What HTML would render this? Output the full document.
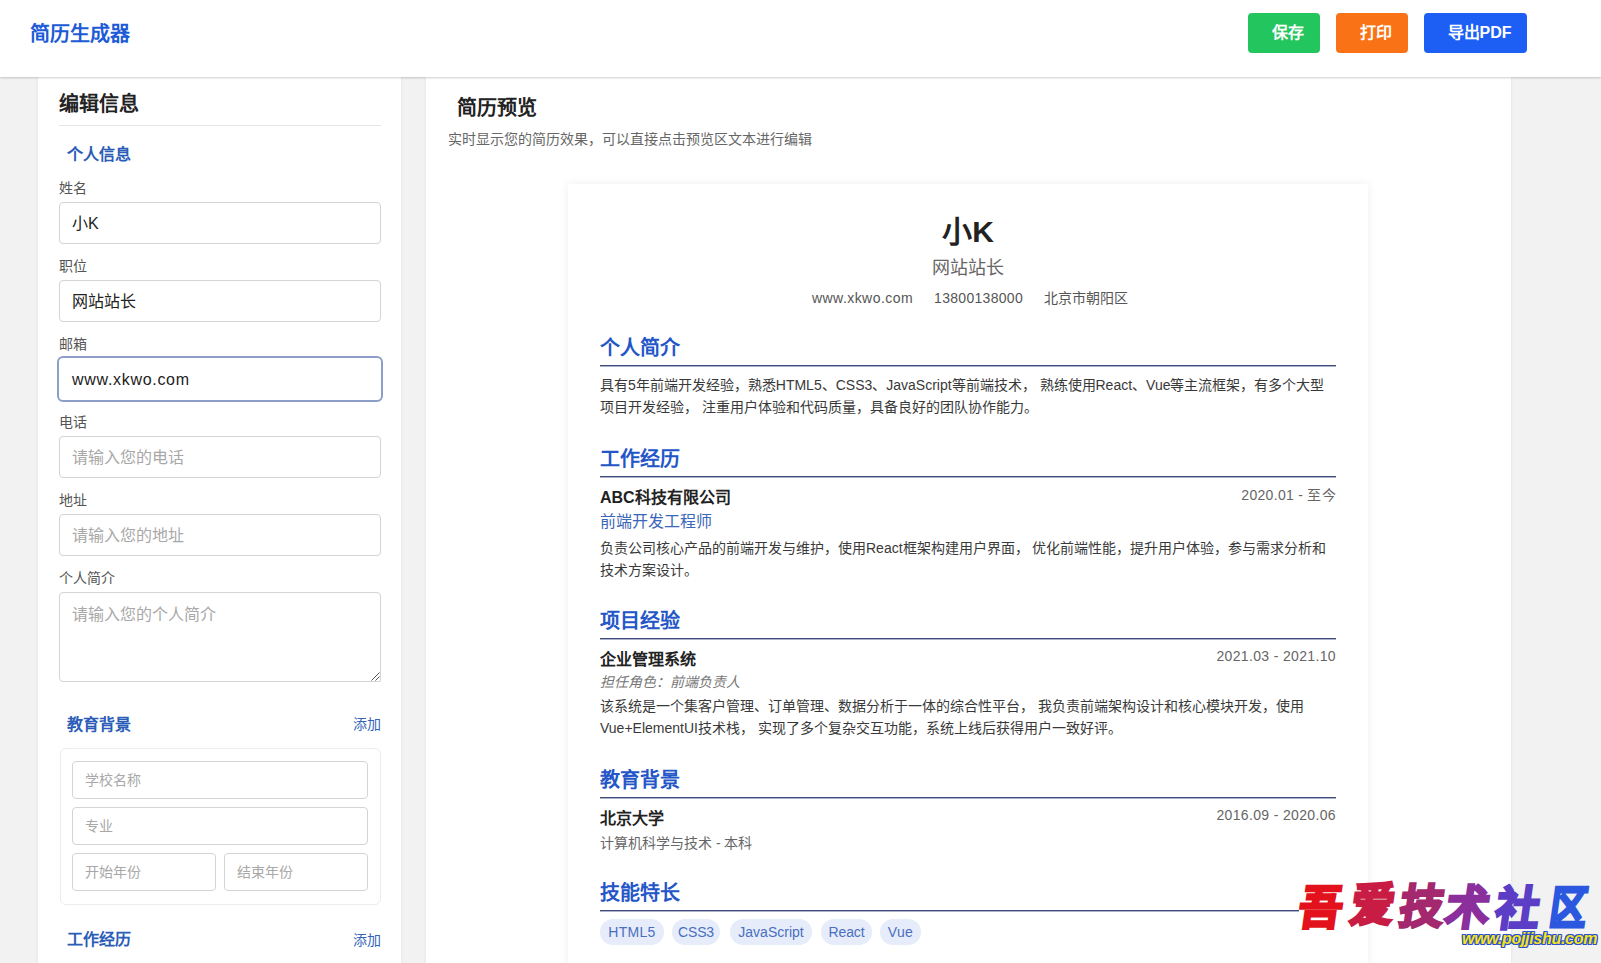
<!DOCTYPE html>
<html lang="zh-CN"><head><meta charset="utf-8">
<style>
*{box-sizing:border-box;margin:0;padding:0}
html,body{width:1601px;height:963px;overflow:hidden}
body{background:#f2f2f2;font-family:"Liberation Sans",sans-serif;color:#333;position:relative}
.hdr{position:absolute;left:0;top:0;width:1601px;height:77px;background:#fff;box-shadow:0 1px 2px rgba(0,0,0,.2);z-index:5}
.logo{position:absolute;left:30px;top:21px;font-size:20px;font-weight:bold;color:#1d5bd6;line-height:26px}
.btn{position:absolute;top:13px;height:40px;border-radius:4px;color:#fff;font-size:16px;font-weight:bold;line-height:40px;text-align:center;padding-left:8px}
.b1{left:1248px;width:72px;background:#22c55e}
.b2{left:1336px;width:72px;background:#f97316}
.b3{left:1424px;width:103px;background:#1d5ff5}
.lp{position:absolute;left:38px;top:77px;width:363px;height:900px;background:#fff;box-shadow:0 0 3px rgba(0,0,0,.08)}
.rp{position:absolute;left:426px;top:77px;width:1085px;height:900px;background:#fff;box-shadow:0 0 3px rgba(0,0,0,.08)}
.ab{position:absolute;white-space:nowrap}
.lt{font-size:20px;font-weight:bold;color:#222;line-height:26px}
.sec{font-size:16px;font-weight:bold;color:#2b5cb8;line-height:22px}
.lbl{font-size:14px;color:#555;line-height:18px}
.inp{position:absolute;left:21px;width:322px;height:42px;border:1px solid #d4d4d4;border-radius:4px;font-size:16px;line-height:40px;padding-left:12px;padding-top:1px;color:#222;overflow:hidden}
.ph{color:#a8a8a8}
.add{font-size:14px;color:#3564b8;line-height:18px}
.card{position:absolute;left:142px;top:107px;width:800px;height:900px;background:#fff;box-shadow:0 0 10px rgba(0,0,0,.07)}
.h2{position:absolute;left:32px;width:736px;font-size:20px;font-weight:bold;color:#2456c8;line-height:26px;border-bottom:1px solid #3f4b7c;height:32px;padding-top:1px;box-shadow:0 1px 0 rgba(70,85,135,.45)}
.p{position:absolute;left:32px;width:740px;font-size:14px;color:#393939;line-height:22.4px}
.tag{height:26px;line-height:26px;padding:0;text-align:center;border-radius:13px;background:#e6ecfa;color:#4a6fbf;font-size:14px;letter-spacing:0.3px}
.wm{position:absolute;font-family:'Liberation Sans',sans-serif;font-weight:bold;font-size:46px;line-height:44px;-webkit-text-stroke-width:3px;transform:skewX(-8deg) scaleX(0.94);transform-origin:0 50%}
</style></head><body>
<div class="hdr">
  <div class="logo">简历生成器</div>
  <div class="btn b1">保存</div>
  <div class="btn b2">打印</div>
  <div class="btn b3">导出PDF</div>
</div>

<div class="lp">
  <div class="ab lt" style="left:21px;top:14px">编辑信息</div>
  <div class="ab" style="left:21px;top:48px;width:322px;height:1px;background:#e6e6e6"></div>
  <div class="ab sec" style="left:29px;top:67px">个人信息</div>
  <div class="ab lbl" style="left:21px;top:102px">姓名</div>
  <div class="inp" style="top:125px">小K</div>
  <div class="ab lbl" style="left:21px;top:180px">职位</div>
  <div class="inp" style="top:203px">网站站长</div>
  <div class="ab lbl" style="left:21px;top:258px">邮箱</div>
  <div class="inp" style="top:279px;left:19px;width:326px;height:46px;line-height:42px;border:2px solid #8d9ec9;border-radius:6px;padding-left:13px;letter-spacing:0.7px">www.xkwo.com</div>
  <div class="ab lbl" style="left:21px;top:336px">电话</div>
  <div class="inp ph" style="top:359px">请输入您的电话</div>
  <div class="ab lbl" style="left:21px;top:414px">地址</div>
  <div class="inp ph" style="top:437px">请输入您的地址</div>
  <div class="ab lbl" style="left:21px;top:492px">个人简介</div>
  <div class="inp ph" style="top:515px;height:90px;line-height:22px;padding-top:11px;border-bottom-right-radius:1px">请输入您的个人简介<svg style="position:absolute;right:0;bottom:0" width="10" height="10"><path d="M9.5 1.5 L1.5 9.5 M9.5 5.5 L5.5 9.5" stroke="#555" stroke-width="1"/></svg></div>
  <div class="ab sec" style="left:29px;top:637px">教育背景</div>
  <div class="ab add" style="left:315px;top:638px">添加</div>
  <div class="ab" style="left:22px;top:671px;width:321px;height:157px;border:1px solid #ececec;border-radius:6px"></div>
  <div class="inp ph" style="left:34px;width:296px;top:684px;height:38px;line-height:36px;font-size:14px;padding-top:0">学校名称</div>
  <div class="inp ph" style="left:34px;width:296px;top:730px;height:38px;line-height:36px;font-size:14px;padding-top:0">专业</div>
  <div class="inp ph" style="left:34px;width:144px;top:776px;height:38px;line-height:36px;font-size:14px;padding-top:0">开始年份</div>
  <div class="inp ph" style="left:186px;width:144px;top:776px;height:38px;line-height:36px;font-size:14px;padding-top:0">结束年份</div>
  <div class="ab sec" style="left:29px;top:852px">工作经历</div>
  <div class="ab add" style="left:315px;top:854px">添加</div>
</div>

<div class="rp">
  <div class="ab lt" style="left:31px;top:18px">简历预览</div>
  <div class="ab" style="left:22px;top:53px;font-size:14px;color:#666;line-height:18px">实时显示您的简历效果，可以直接点击预览区文本进行编辑</div>
  <div class="card">
    <div class="ab" style="left:0;width:800px;text-align:center;top:28px;font-size:30px;font-weight:bold;color:#222;line-height:40px">小K</div>
    <div class="ab" style="left:0;width:800px;text-align:center;top:71.5px;font-size:18px;color:#666;line-height:24px">网站站长</div>
    <div class="ab" style="left:0;width:800px;text-align:center;top:104px;font-size:14px;color:#555;line-height:20px;padding-left:4px"><span style="letter-spacing:0.45px">www.xkwo.com</span><span style="display:inline-block;width:21px"></span><span style="letter-spacing:0.3px">13800138000</span><span style="display:inline-block;width:21px"></span>北京市朝阳区</div>

    <div class="h2" style="top:150px">个人简介</div>
    <div class="p" style="top:190px">具有5年前端开发经验，熟悉HTML5、CSS3、JavaScript等前端技术， 熟练使用React、Vue等主流框架，有多个大型<br>项目开发经验， 注重用户体验和代码质量，具备良好的团队协作能力。</div>

    <div class="h2" style="top:261px">工作经历</div>
    <div class="ab" style="left:32px;top:303px;font-size:16px;font-weight:bold;color:#222;line-height:22px">ABC科技有限公司</div>
    <div class="ab" style="right:32px;top:301px;font-size:14px;color:#666;line-height:20px;letter-spacing:0.3px">2020.01 - 至今</div>
    <div class="ab" style="left:32px;top:327px;font-size:16px;color:#3b67b8;line-height:22px">前端开发工程师</div>
    <div class="p" style="top:353px">负责公司核心产品的前端开发与维护，使用React框架构建用户界面， 优化前端性能，提升用户体验，参与需求分析和<br>技术方案设计。</div>

    <div class="h2" style="top:423px">项目经验</div>
    <div class="ab" style="left:32px;top:465px;font-size:16px;font-weight:bold;color:#222;line-height:22px">企业管理系统</div>
    <div class="ab" style="right:32px;top:462px;font-size:14px;color:#666;line-height:20px;letter-spacing:0.35px">2021.03 - 2021.10</div>
    <div class="ab" style="left:32px;top:488px;font-size:14px;color:#777;font-style:italic;line-height:20px">担任角色：前端负责人</div>
    <div class="p" style="top:511px">该系统是一个集客户管理、订单管理、数据分析于一体的综合性平台， 我负责前端架构设计和核心模块开发，使用<br>Vue+ElementUI技术栈， 实现了多个复杂交互功能，系统上线后获得用户一致好评。</div>

    <div class="h2" style="top:582px">教育背景</div>
    <div class="ab" style="left:32px;top:624px;font-size:16px;font-weight:bold;color:#222;line-height:22px">北京大学</div>
    <div class="ab" style="right:32px;top:621px;font-size:14px;color:#666;line-height:20px;letter-spacing:0.35px">2016.09 - 2020.06</div>
    <div class="ab" style="left:32px;top:649px;font-size:14px;color:#666;line-height:20px">计算机科学与技术 - 本科</div>

    <div class="h2" style="top:695px">技能特长</div>
    <div class="ab tag" style="left:32px;top:735px;width:64px">HTML5</div>
    <div class="ab tag" style="left:104px;top:735px;width:48px;letter-spacing:-0.2px">CSS3</div>
    <div class="ab tag" style="left:162px;top:735px;width:82px;letter-spacing:0">JavaScript</div>
    <div class="ab tag" style="left:253px;top:735px;width:51px;letter-spacing:-0.1px">React</div>
    <div class="ab tag" style="left:312px;top:735px;width:41px">Vue</div>
  </div>
</div>

<div class="ab" style="left:1299px;top:906px;width:37px;height:6px;background:#fff"></div>
<div class="wm" style="left:1299px;top:886px;color:#e3111b">吾</div>
<div class="wm" style="left:1351px;top:883px;color:#c81c44">爱</div>
<div class="wm" style="left:1400px;top:885px;color:#a3286e">技</div>
<div class="wm" style="left:1446px;top:886px;color:#8a2f9c">术</div>
<div class="wm" style="left:1496px;top:887px;color:#5c3ec6">社</div>
<div class="wm" style="left:1550px;top:886px;color:#2c58e0;transform:skewX(-8deg) scaleX(0.8)">区</div>
<div class="ab" style="left:1462px;top:929px;font-family:'Liberation Sans',sans-serif;font-weight:bold;font-style:italic;font-size:16px;line-height:20px;color:#f4e31a;letter-spacing:-0.3px;text-shadow:1px 0 0 #2a4fd0,-1px 0 0 #2a4fd0,0 1px 0 #2a4fd0,0 -1px 0 #2a4fd0,1px 1px 0 #2a4fd0,-1px -1px 0 #2a4fd0,1px -1px 0 #2a4fd0,-1px 1px 0 #2a4fd0">www.pojjishu.com</div>
</body></html>
